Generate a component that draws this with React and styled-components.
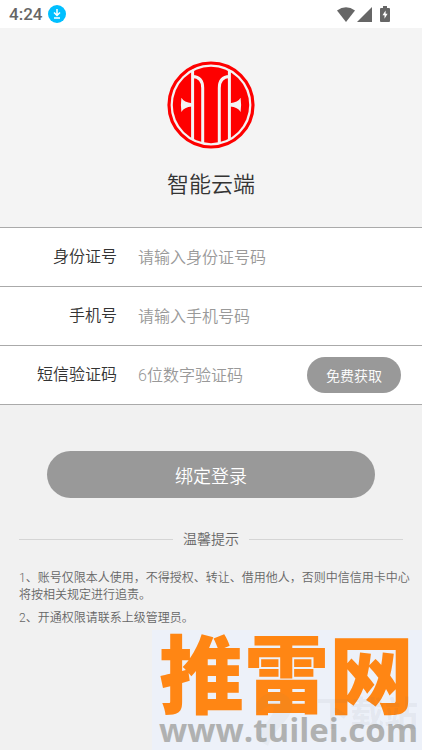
import React, { useState } from 'react';
import styled, { createGlobalStyle, css } from 'styled-components';

const GlobalStyle = createGlobalStyle`
  * {
    box-sizing: border-box;
  }

  body {
    margin: 0;
    background-color: #f1f1f1;
    color: #333;
    font-family: Roboto, "Noto Sans CJK SC", sans-serif;
    font-weight: 350;
  }

  button, input {
    font-family: inherit;
    font-weight: inherit;
  }
`;

const PageLayout = styled.div`
  position: relative;
  min-height: 100vh;
  overflow: hidden;
  background-color: #f1f1f1;
`;

const StatusBar = styled.div`
  display: flex;
  align-items: center;
  justify-content: space-between;
  height: 28px;
  padding: 0 32px 0 9px;
  background-color: #fff;
  color: #666;
  font-size: 17px;
  font-weight: 500;

  .timeBox, .iconBox {
    display: flex;
    align-items: center;
  }
  .timeBox {
    gap: 6px;
  }
  .iconBox {
    gap: 2px;
  }
  .battery {
    margin-left: 6px;
  }
`;

const Header = styled.header`
  display: flex;
  flex-direction: column;
  align-items: center;
  padding: 33px 0 26px;
  background-color: #f4f4f4;

  h1 {
    margin: 20px 0 0;
    font-size: 22px;
    font-weight: inherit;
    line-height: 32px;
  }
`;

const Form = styled.form`
  margin: 0;
`;

const FieldList = styled.div`
  border-top: 1px solid #aaa;
  background-color: #fff;
`;

const Field = styled.div`
  display: flex;
  align-items: center;
  height: 59px;
  padding-right: 21px;
  border-bottom: 1px solid #aaa;

  label {
    flex: 0 0 117px;
    text-align: right;
    font-size: 16px;
    line-height: 24px;
  }
  input {
    flex: 1;
    min-width: 0;
    height: 24px;
    margin-left: 21px;
    padding: 0;
    border: 0;
    outline: 0;
    background: none;
    color: #333;
    font-size: 16px;
  }
  input::placeholder {
    color: #999;
    opacity: 1;
  }
`;

const RoundButton = styled.button`
  flex: none;
  border: 0;
  padding: 0;
  border-radius: 24px;
  background-color: #999;
  color: #fff;
  cursor: pointer;

  ${props => props.$size === 'small' &&
    css`
      width: 94px;
      height: 36px;
      font-size: 14px;
  `}

  ${props => props.$size === 'large' &&
    css`
      width: 100%;
      height: 47px;
      font-size: 18px;
  `}
`;

const SubmitBox = styled.div`
  padding: 46px 47px 0;
`;

const TipTitle = styled.h2`
  display: flex;
  align-items: center;
  gap: 10px;
  margin: 31px 19px 0;
  color: #666;
  font-size: 14px;
  font-weight: inherit;
  line-height: 20px;

  &::before, &::after {
    content: "";
    flex: 1;
    height: 1px;
    background-color: #d5d5d5;
  }
`;

const TipList = styled.div`
  padding: 21px 12px 0 19px;
  color: #666;
  font-size: 12px;
  line-height: 17px;

  p {
    margin: 0 0 6px;
  }
`;

const Watermark = styled.div`
  position: absolute;
  right: 0;
  bottom: 0;
  width: 270px;
  height: 120px;
  padding-left: 7px;
  background-color: #edf1f9;
  font-weight: 700;
  white-space: nowrap;

  .name {
    color: #ff8614;
    font-family: "Noto Sans CJK SC", sans-serif;
    font-size: 85px;
    font-weight: 900;
    line-height: 80px;
  }
  .site {
    margin-top: 4px;
    color: #b0b1b1;
    font-family: "Open Sans", sans-serif;
    font-size: 33px;
    line-height: 32px;
  }
  .stamp {
    position: absolute;
    right: 4px;
    bottom: 16px;
    color: rgba(100, 110, 120, 0.08);
    font-family: "Noto Sans CJK SC", sans-serif;
    font-size: 34px;
    line-height: 44px;
  }
  svg {
    position: absolute;
    left: 98px;
    bottom: 0;
  }
`;

function DownloadIcon() {
  return (
    <svg width='18' height='18' viewBox='0 0 18 18' aria-hidden='true'>
      <circle cx='9' cy='9' r='9' fill='#00bfff' />
      <path d='M9 4v6M6 7.5l3 3 3-3M6 13h6' fill='none' stroke='#fff' strokeWidth='1.5' />
    </svg>
  );
}

function SignalIcons() {
  return (
    <div className='iconBox'>
      <svg width='18' height='15' viewBox='0 0 18 15' aria-hidden='true'>
        <path d='M0 3.5Q9-3 18 3.5L9 15Z' fill='#666' />
      </svg>
      <svg width='15' height='15' viewBox='0 0 15 15' aria-hidden='true'>
        <path d='M15 0v15H0Z' fill='#666' />
      </svg>
      <svg className='battery' width='10' height='16' viewBox='0 0 10 16' aria-hidden='true'>
        <path d='M3 0h4v2h2q1 0 1 1v12q0 1-1 1H1q-1 0-1-1V3q0-1 1-1h2Z' fill='#666' />
        <path d='M5.6 4.5v3.3h2L4.5 12.8V9.3h-2Z' fill='#fff' />
      </svg>
    </div>
  );
}

function Logo() {
  return (
    <svg width='88' height='88' viewBox='0 0 88 88' role='img' aria-label='智能云端'>
      <defs>
        <clipPath id='disc'>
          <circle cx='44' cy='44' r='40' />
        </clipPath>
      </defs>
      <circle cx='44' cy='44' r='42' fill='none' stroke='#fe0000' strokeWidth='3.2' />
      <circle cx='44' cy='44' r='38.2' fill='#fe0000' />
      <g clipPath='url(#disc)' fill='none' stroke='#f4f4f4' strokeWidth='3'>
        <path d='M25.6 0v88M62.4 0v88' />
        <path d='M25.6 15.5C32 15.8 35.7 19 35.7 27V88M62.4 15.5C56 15.8 52.3 19 52.3 27V88' />
        <path d='M14.4 36.8Q17 41.6 25 42.2v3.4Q17 46.2 14.4 51 13.4 43.8 14.4 36.8ZM73.6 36.8Q71 41.6 63 42.2v3.4Q71 46.2 73.6 51 74.6 43.8 73.6 36.8Z' fill='#f4f4f4' stroke='none' />
      </g>
    </svg>
  );
}

function App() {
  const [idNumber, setIdNumber] = useState('');
  const [phone, setPhone] = useState('');
  const [code, setCode] = useState('');

  const handleSubmit = (e) => e.preventDefault();

  return (
    <>
      <GlobalStyle />
      <PageLayout>
        <StatusBar>
          <div className='timeBox'>
            <span>4:24</span>
            <DownloadIcon />
          </div>
          <SignalIcons />
        </StatusBar>
        <Header>
          <Logo />
          <h1>智能云端</h1>
        </Header>
        <Form onSubmit={handleSubmit}>
          <FieldList>
            <Field>
              <label htmlFor='idNumber'>身份证号</label>
              <input id='idNumber' type='text' placeholder='请输入身份证号码' value={idNumber} onChange={(e) => setIdNumber(e.target.value)} />
            </Field>
            <Field>
              <label htmlFor='phone'>手机号</label>
              <input id='phone' type='tel' placeholder='请输入手机号码' value={phone} onChange={(e) => setPhone(e.target.value)} />
            </Field>
            <Field>
              <label htmlFor='code'>短信验证码</label>
              <input id='code' type='text' placeholder='6位数字验证码' value={code} onChange={(e) => setCode(e.target.value)} />
              <RoundButton type='button' $size='small'>免费获取</RoundButton>
            </Field>
          </FieldList>
          <SubmitBox>
            <RoundButton type='submit' $size='large'>绑定登录</RoundButton>
          </SubmitBox>
        </Form>
        <TipTitle>温馨提示</TipTitle>
        <TipList>
          <p>1、账号仅限本人使用，不得授权、转让、借用他人，否则中信信用卡中心将按相关规定进行追责。</p>
          <p>2、开通权限请联系上级管理员。</p>
        </TipList>
        <Watermark>
          <div className='name'>推雷网</div>
          <div className='site'>www.tuilei.com</div>
          <div className='stamp'>下载站</div>
          <svg width='44' height='60' viewBox='0 0 44 60' aria-hidden='true'>
            <path d='M6 14C14-2 40-2 42 16 42 30 24 38 18 56L8 50C10 36 24 28 24 18 18 12 14 22 6 22Z' fill='#708070' opacity='0.06' />
          </svg>
        </Watermark>
      </PageLayout>
    </>
  );
}

export default App;
